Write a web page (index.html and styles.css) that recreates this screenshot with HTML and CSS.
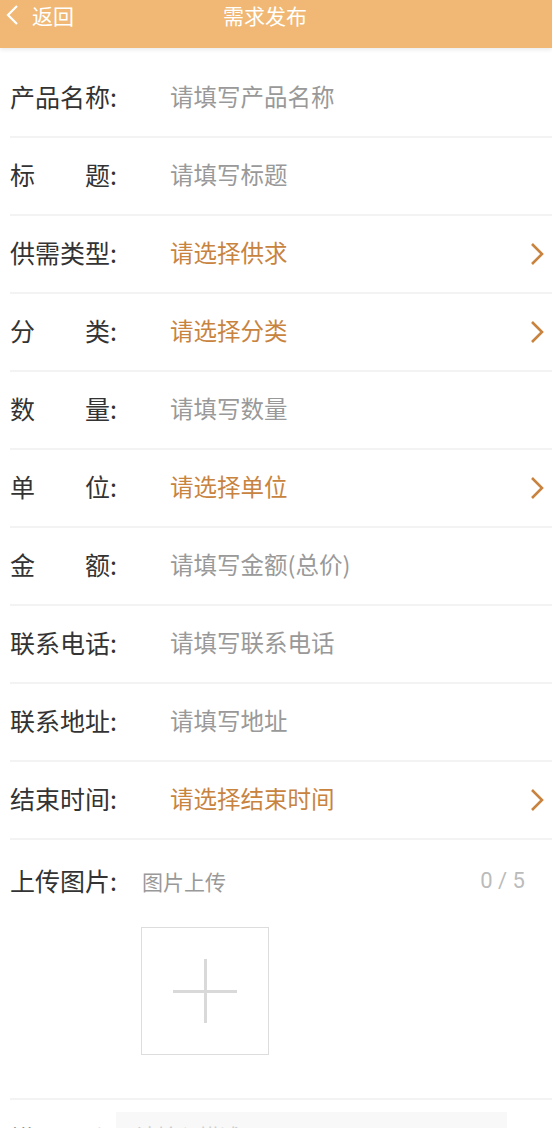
FILE: index.html
```html
<!DOCTYPE html>
<html lang="zh-CN">
<head>
    <meta charset="UTF-8">
    <meta name="viewport" content="width=device-width, initial-scale=1.0">
    <title>需求发布</title>
    <link rel="stylesheet" href="styles.css">
</head>
<body>

    <!-- 顶部导航 -->
    <div class="header">
        <div class="back">
            <svg width="14" height="22" viewBox="0 0 14 22"><path d="M12 2 L3 11 L12 20" fill="none" stroke="#fff" stroke-width="2.2"/></svg>
            <span>返回</span>
        </div>
        <div class="title">需求发布</div>
    </div>

    <!-- 表单 -->
    <div class="form">
        <div class="row">
            <span class="label"><span class="name">产品名称</span>:</span>
            <span class="value">请填写产品名称</span>
        </div>
        <div class="row">
            <span class="label"><span class="name">标题</span>:</span>
            <span class="value">请填写标题</span>
        </div>
        <div class="row select">
            <span class="label"><span class="name">供需类型</span>:</span>
            <span class="value">请选择供求</span>
            <svg class="arrow" width="14" height="24" viewBox="0 0 14 24"><path d="M2 2 L12 12 L2 22" fill="none" stroke="#c8843f" stroke-width="2.6"/></svg>
        </div>
        <div class="row select">
            <span class="label"><span class="name">分类</span>:</span>
            <span class="value">请选择分类</span>
            <svg class="arrow" width="14" height="24" viewBox="0 0 14 24"><path d="M2 2 L12 12 L2 22" fill="none" stroke="#c8843f" stroke-width="2.6"/></svg>
        </div>
        <div class="row">
            <span class="label"><span class="name">数量</span>:</span>
            <span class="value">请填写数量</span>
        </div>
        <div class="row select">
            <span class="label"><span class="name">单位</span>:</span>
            <span class="value">请选择单位</span>
            <svg class="arrow" width="14" height="24" viewBox="0 0 14 24"><path d="M2 2 L12 12 L2 22" fill="none" stroke="#c8843f" stroke-width="2.6"/></svg>
        </div>
        <div class="row">
            <span class="label"><span class="name">金额</span>:</span>
            <span class="value">请填写金额(总价)</span>
        </div>
        <div class="row">
            <span class="label"><span class="name">联系电话</span>:</span>
            <span class="value">请填写联系电话</span>
        </div>
        <div class="row">
            <span class="label"><span class="name">联系地址</span>:</span>
            <span class="value">请填写地址</span>
        </div>
        <div class="row select">
            <span class="label"><span class="name">结束时间</span>:</span>
            <span class="value">请选择结束时间</span>
            <svg class="arrow" width="14" height="24" viewBox="0 0 14 24"><path d="M2 2 L12 12 L2 22" fill="none" stroke="#c8843f" stroke-width="2.6"/></svg>
        </div>

        <!-- 上传图片 -->
        <div class="upload">
            <div class="upload-head">
                <span class="label"><span class="name">上传图片</span>:</span>
                <span class="upload-tip">图片上传</span>
                <span class="count">0 / 5</span>
            </div>
            <div class="add-box">
                <span class="plus-h"></span>
                <span class="plus-v"></span>
            </div>
        </div>

        <div class="desc">
            <span class="label"><span class="name">描述</span>:</span>
            <div class="textarea">请输入描述</div>
        </div>
    </div>

</body>
</html>
```

FILE: styles.css
```css
body {
    margin: 0;
    background-color: #fff;
    font-family: "Noto Sans CJK SC", "Noto Sans", sans-serif;
    overflow: hidden;
}
.header {
    position: relative;
    height: 48px;
    background-color: #f0b874;
    color: #fff;
    box-shadow: 0 2px 4px rgba(0, 0, 0, 0.08);
}
.back {
    position: absolute;
    top: 0;
    left: 5px;
    height: 30px;
    display: flex;
    align-items: center;
    gap: 13px;
    font-size: 21px;
}
.back svg {
    display: block;
}
.title {
    text-align: center;
    line-height: 30px;
    font-size: 21px;
    padding-right: 22px;
}
.form {
    margin-top: 12px;
    padding-left: 10px;
}
.row {
    display: flex;
    align-items: center;
    height: 72px;
    padding-bottom: 4px;
    border-bottom: 2px solid #f3f3f3;
    font-size: 23.5px;
}
.label {
    display: flex;
    color: #333;
    width: 160px;
    flex-shrink: 0;
    font-size: 25px;
}
.name {
    display: inline-block;
    width: 100px;
    text-align: justify;
    text-align-last: justify;
}
.value {
    flex: 1;
    color: #999;
}
.select .value {
    color: #c8843f;
}
.arrow {
    margin-right: 8px;
    margin-top: 4px;
}
.upload {
    height: 260px;
    border-bottom: 2px solid #f3f3f3;
    padding-top: 22px;
    box-sizing: border-box;
}
.upload-head {
    display: flex;
    align-items: center;
    height: 36px;
}
.upload-head .label {
    width: 132px;
}
.upload-tip {
    flex: 1;
    color: #999;
    font-size: 21px;
    padding-top: 2px;
}
.count {
    color: #bbb;
    font-family: Roboto, sans-serif;
    font-size: 22px;
    margin-right: 27px;
}
.add-box {
    position: relative;
    width: 126px;
    height: 126px;
    margin: 29px 0 0 131px;
    border: 1px solid #ddd;
}
.plus-h {
    position: absolute;
    left: 31px;
    top: 62px;
    width: 64px;
    height: 3px;
    background-color: #d9d9d9;
}
.plus-v {
    position: absolute;
    left: 62px;
    top: 31px;
    width: 3px;
    height: 64px;
    background-color: #d9d9d9;
}
.desc {
    display: flex;
    padding-top: 12px;
}
.desc .label {
    width: 106px;
    padding-top: 8px;
}
.textarea {
    width: 391px;
    height: 120px;
    background-color: #f8f8f8;
    color: #ccc;
    font-size: 21px;
    padding: 8px 20px;
    box-sizing: border-box;
}
```
